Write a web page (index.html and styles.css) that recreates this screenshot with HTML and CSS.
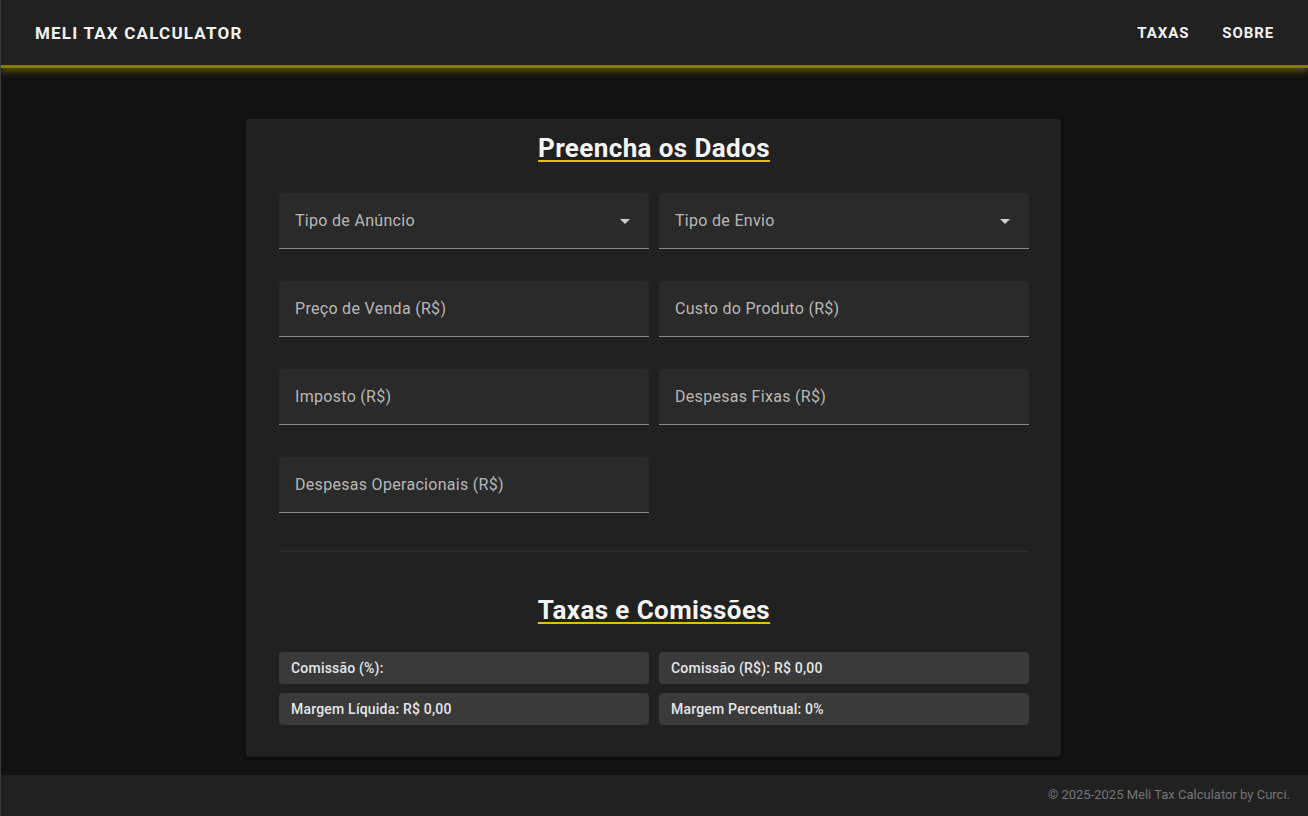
FILE: index.html
```html
<!DOCTYPE html>
<html lang="pt-BR">
<head>
<meta charset="utf-8">
<title>Meli Tax Calculator</title>
<link rel="stylesheet" href="styles.css">
</head>
<body>
<header class="appbar">
  <div class="brand">MELI TAX CALCULATOR</div>
  <nav class="nav">
    <a class="nav-link">TAXAS</a>
    <a class="nav-link">SOBRE</a>
  </nav>
</header>
<main class="main">
  <section class="card">
    <h2 class="section-title">Preencha os Dados</h2>
    <div class="fields">
      <div class="field select"><span class="label">Tipo de Anúncio</span><span class="caret"></span></div>
      <div class="field select"><span class="label">Tipo de Envio</span><span class="caret"></span></div>
      <div class="field"><span class="label">Preço de Venda (R$)</span></div>
      <div class="field"><span class="label">Custo do Produto (R$)</span></div>
      <div class="field"><span class="label">Imposto (R$)</span></div>
      <div class="field"><span class="label">Despesas Fixas (R$)</span></div>
      <div class="field"><span class="label">Despesas Operacionais (R$)</span></div>
    </div>
    <hr class="divider">
    <h2 class="section-title second">Taxas e Comissões</h2>
    <div class="results">
      <div class="result">Comissão (%):</div>
      <div class="result">Comissão (R$): R$ 0,00</div>
      <div class="result">Margem Líquida: R$ 0,00</div>
      <div class="result">Margem Percentual: 0%</div>
    </div>
  </section>
</main>
<footer class="footer">© 2025-2025 Meli Tax Calculator by Curci.</footer>
</body>
</html>
```
FILE: styles.css
```css
* { box-sizing: border-box; }
html, body { margin: 0; padding: 0; }
body {
  background: #121212;
  font-family: Roboto, "Liberation Sans", sans-serif;
  color: #fff;
  height: 816px;
  display: flex;
  flex-direction: column;
  border-left: 1px solid #3a3a3a;
}
.appbar {
  height: 68px;
  background: #212121;
  border-bottom: 3px solid #8a7c00;
  box-shadow: 0 3px 7px rgba(130, 115, 0, 0.7);
  display: flex;
  align-items: center;
  justify-content: space-between;
  padding: 0 34px 0 34px;
  position: relative;
  z-index: 1;
}
.brand {
  font-weight: 700;
  font-size: 17px;
  letter-spacing: 1.2px;
  color: #f2f2f2;
  margin-top: 1px;
}
.nav { display: flex; gap: 33px; margin-top: 1px; }
.nav-link {
  font-weight: 700;
  font-size: 15px;
  letter-spacing: 0.9px;
  color: #f2f2f2;
}
.main {
  flex: 1;
  display: flex;
  justify-content: center;
  padding-top: 51px;
}
.card {
  width: 815px;
  height: 638px;
  margin-right: 2px;
  background: #212121;
  border-radius: 4px;
  box-shadow: 0 2px 4px rgba(0,0,0,0.4);
  padding: 14px 32px 0 33px;
}
.section-title {
  margin: 0;
  text-align: center;
  font-size: 26px;
  font-weight: 700;
  letter-spacing: 0.4px;
  line-height: 30px;
  color: #f5f5f5;
  text-decoration: underline;
  text-decoration-color: #e3c100;
  text-decoration-thickness: 2px;
  text-underline-offset: 3px;
}
.fields {
  margin-top: 30px;
  display: grid;
  grid-template-columns: 370px 370px;
  column-gap: 10px;
  row-gap: 32px;
}
.field {
  height: 56px;
  background: #2a2a2a;
  border-radius: 4px 4px 0 0;
  border-bottom: 1px solid #8c8c8c;
  display: flex;
  align-items: center;
  justify-content: space-between;
  padding: 0 19px 1px 16px;
}
.label {
  font-size: 16px;
  letter-spacing: 0.3px;
  color: #b8b8b8;
}
.caret {
  width: 0;
  height: 0;
  border-left: 5px solid transparent;
  border-right: 5px solid transparent;
  border-top: 5px solid #d0d0d0;
  margin-top: 2px;
}
.divider {
  border: none;
  border-top: 1px solid #2e2e2e;
  margin: 38px 0 0 0;
}
.section-title.second { margin-top: 43px; }
.results {
  margin-top: 27px;
  display: grid;
  grid-template-columns: 370px 370px;
  column-gap: 10px;
  row-gap: 9px;
}
.result {
  height: 32px;
  background: #3a3a3a;
  border-radius: 4px;
  font-size: 14px;
  font-weight: 500;
  letter-spacing: 0.2px;
  color: #e6e6e6;
  display: flex;
  align-items: center;
  padding: 0 12px;
}
.footer {
  height: 41px;
  background: #212121;
  color: #757575;
  font-size: 13px;
  display: flex;
  align-items: center;
  justify-content: flex-end;
  padding: 0 18px 2px 0;
}
```
